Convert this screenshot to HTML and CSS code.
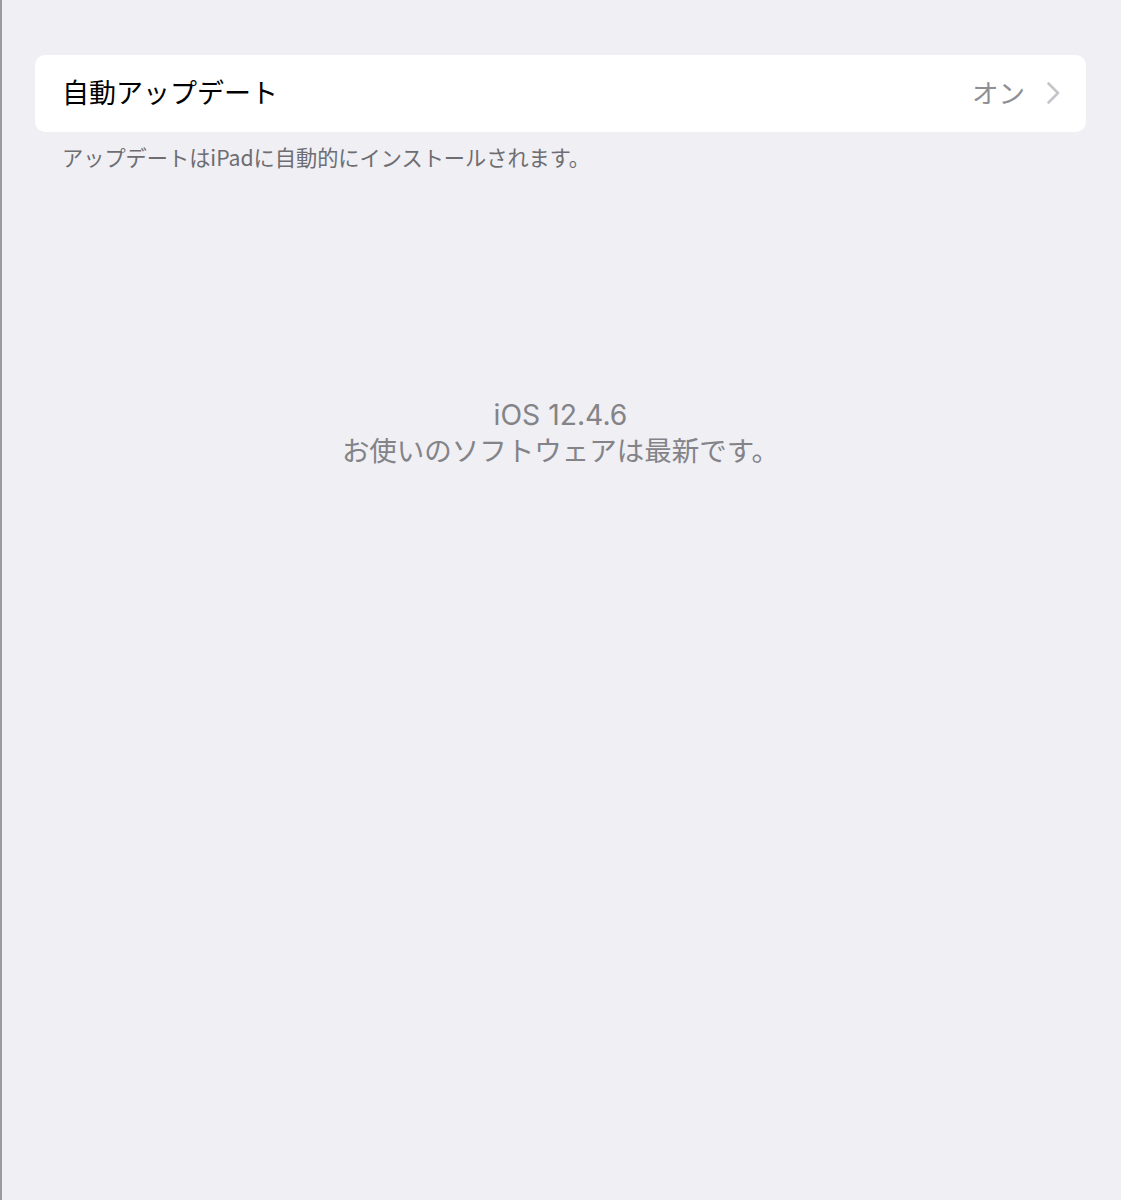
FILE: index.html
```
<!DOCTYPE html>
<html lang="ja">
<head>
<meta charset="utf-8">
<link rel="stylesheet" href="styles.css">
</head>
<body>
<div class="page">
  <div class="card">
    <div class="row">
      <span class="label">自動アップデート</span>
      <span class="value">オン</span>
      <svg class="chev" width="15" height="24" viewBox="0 0 15 24"><path d="M2.5 2.5 L12 12 L2.5 21.5" fill="none" stroke="#c4c4c9" stroke-width="2.6" stroke-linecap="round" stroke-linejoin="round"/></svg>
    </div>
  </div>
  <div class="footer">アップデートはiPadに自動的にインストールされます。</div>
  <div class="status">
    <div class="ver">iOS 12.4.6</div>
    <div class="msg">お使いのソフトウェアは最新です。</div>
  </div>
</div>
</body>
</html>
```
FILE: styles.css
```
html, body {
  margin: 0;
  padding: 0;
  height: 100%;
}
body {
  background: #efeff4;
  font-family: "Noto Sans CJK JP", "Noto Sans", sans-serif;
}
.page {
  min-height: 1200px;
  box-sizing: border-box;
  border-left: 2px solid #9a9aa0;
  padding: 55px 35px 0 33px;
}
.card {
  background: #ffffff;
  border-radius: 10px;
}
.row {
  height: 77px;
  display: flex;
  align-items: center;
  padding: 0 25px 4px 27px;
  box-sizing: border-box;
}
.label {
  flex: 1;
  font-size: 27px;
  color: #000;
}
.value {
  font-size: 26.5px;
  color: #8e8e93;
  margin-right: 21px;
}
.chev {
  display: block;
  margin-top: 2px;
}
.footer {
  padding: 11px 0 0 27px;
  font-size: 21.2px;
  color: #6d6d72;
  line-height: 28px;
}
.status {
  margin-top: 229px;
  text-align: center;
  color: #838388;
  font-size: 27.5px;
  line-height: 36px;
}
.ver {
  font-family: "Inter", "Noto Sans", sans-serif;
  font-size: 28.3px;
  line-height: 31px;
}
```
